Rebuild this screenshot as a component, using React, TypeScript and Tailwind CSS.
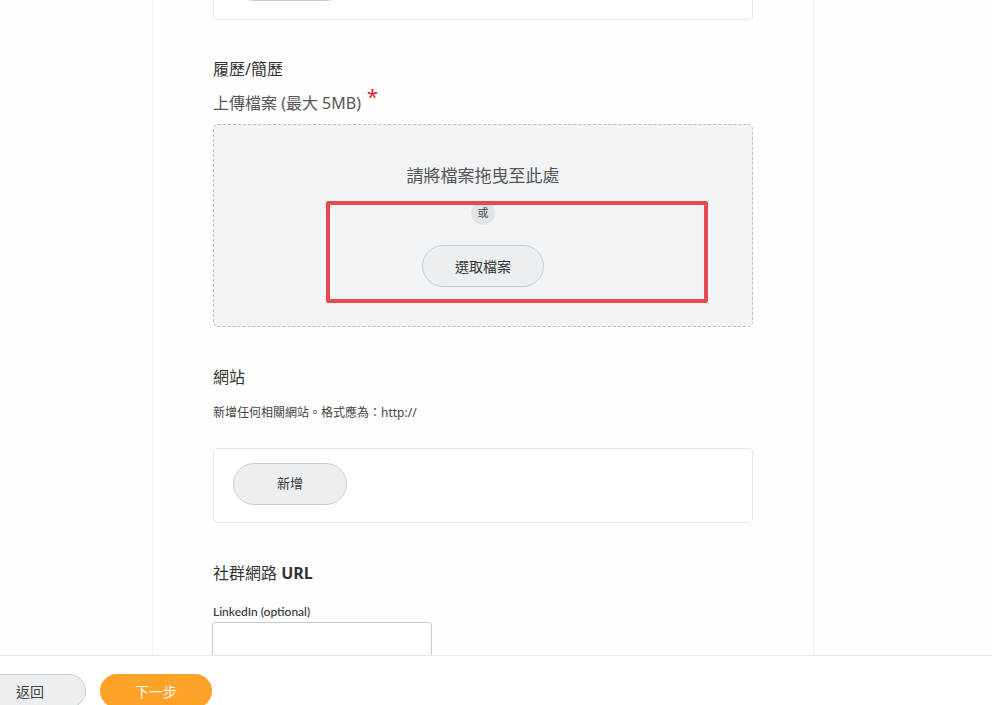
import React from "react";

const font = {
  fontFamily: '"Noto Sans", "Noto Sans CJK TC", sans-serif',
};

function PillButton({ label, className = "" }: { label: string; className?: string }) {
  return (
    <button
      className={`flex items-center justify-center rounded-full border border-[#c9ced3] bg-[#eceff1] text-[#333] ${className}`}
    >
      {label}
    </button>
  );
}

export default function App() {
  return (
    <div style={font} className="relative h-[705px] w-[992px] overflow-hidden bg-[#fdfdfd]">
      {/* main scroll area */}
      <div className="h-[655px] overflow-hidden">
        <div className="ml-[152px] flex h-[655px] w-[662px] flex-col items-start border-x border-[#f2f2f2] bg-[#fefefe] px-[60px]">
          {/* top card (partially scrolled out) */}
          <div className="-mt-[56px] w-[540px] rounded-[4px] border border-[#e4e7eb] bg-white px-[19px] pt-[14px] pb-[18px]">
            <PillButton label="新增" className="h-[42px] w-[114px] text-[13px]" />
          </div>

          {/* Resume */}
          <h2 className="mt-[37px] text-[16px] leading-[24px] font-normal text-[#333]">履歷/簡歷</h2>
          <div className="mt-[10px] flex items-start text-[16px] leading-[24px] text-[#555]">
            <span>上傳檔案 (最大 5MB)</span>
            <span className="ml-[6px] -mt-[6px] text-[20px] text-[#e02424]">*</span>
          </div>
          <div className="mt-[9px] flex w-[540px] flex-col items-center rounded-[5px] border border-dashed border-[#b8bec4] bg-[#f1f4f7] pt-[39px] pb-[39px]">
            <div className="text-[17px] leading-[24px] text-[#555]">請將檔案拖曳至此處</div>
            <div className="mt-[13px] flex h-[24px] w-[24px] items-center justify-center rounded-full bg-[#e1e4e7] text-[11px] text-[#444]">
              或
            </div>
            <PillButton label="選取檔案" className="mt-[20px] h-[42px] w-[122px] text-[14px]" />
          </div>

          {/* Website */}
          <h2 className="mt-[38px] text-[16px] leading-[24px] font-normal text-[#333]">網站</h2>
          <p className="mt-[15px] text-[12px] leading-[18px] text-[#444]">新增任何相關網站。格式應為：http://</p>
          <div className="mt-[26px] w-[540px] rounded-[4px] border border-[#e4e7eb] bg-white px-[19px] pt-[14px] pb-[17px]">
            <PillButton label="新增" className="h-[42px] w-[114px] text-[13px]" />
          </div>

          {/* Social */}
          <h2 className="mt-[38px] text-[16px] leading-[24px] font-normal text-[#333]">
            社群網路 <span className="font-bold">URL</span>
          </h2>
          <div className="mt-[19px] text-[12px] leading-[16px] font-medium text-[#333]" style={{ fontFamily: 'Lato, "Noto Sans", sans-serif' }}>
            LinkedIn (optional)
          </div>
          <div className="mt-[2px] -ml-[1px] h-[40px] w-[220px] shrink-0 rounded-[3px] border border-[#c4ccd4] bg-white" />
        </div>
      </div>

      {/* footer */}
      <div className="-ml-[26px] flex h-[50px] items-start gap-[14px] border-t border-[#e8e8e8] bg-white pt-[18px]">
        <button className="flex h-[34px] w-[112px] items-center justify-center rounded-full border border-[#c8ced3] bg-[#eceff1] text-[14px] text-[#444]">
          返回
        </button>
        <button className="flex h-[34px] w-[112px] items-center justify-center rounded-full bg-[#ffa227] text-[14px] text-white">
          下一步
        </button>
      </div>

      {/* red annotation box */}
      <div className="pointer-events-none absolute left-[326px] top-[201px] h-[102px] w-[382px] rounded-[2px] border-[4px] border-[#e8484e]" />
    </div>
  );
}
